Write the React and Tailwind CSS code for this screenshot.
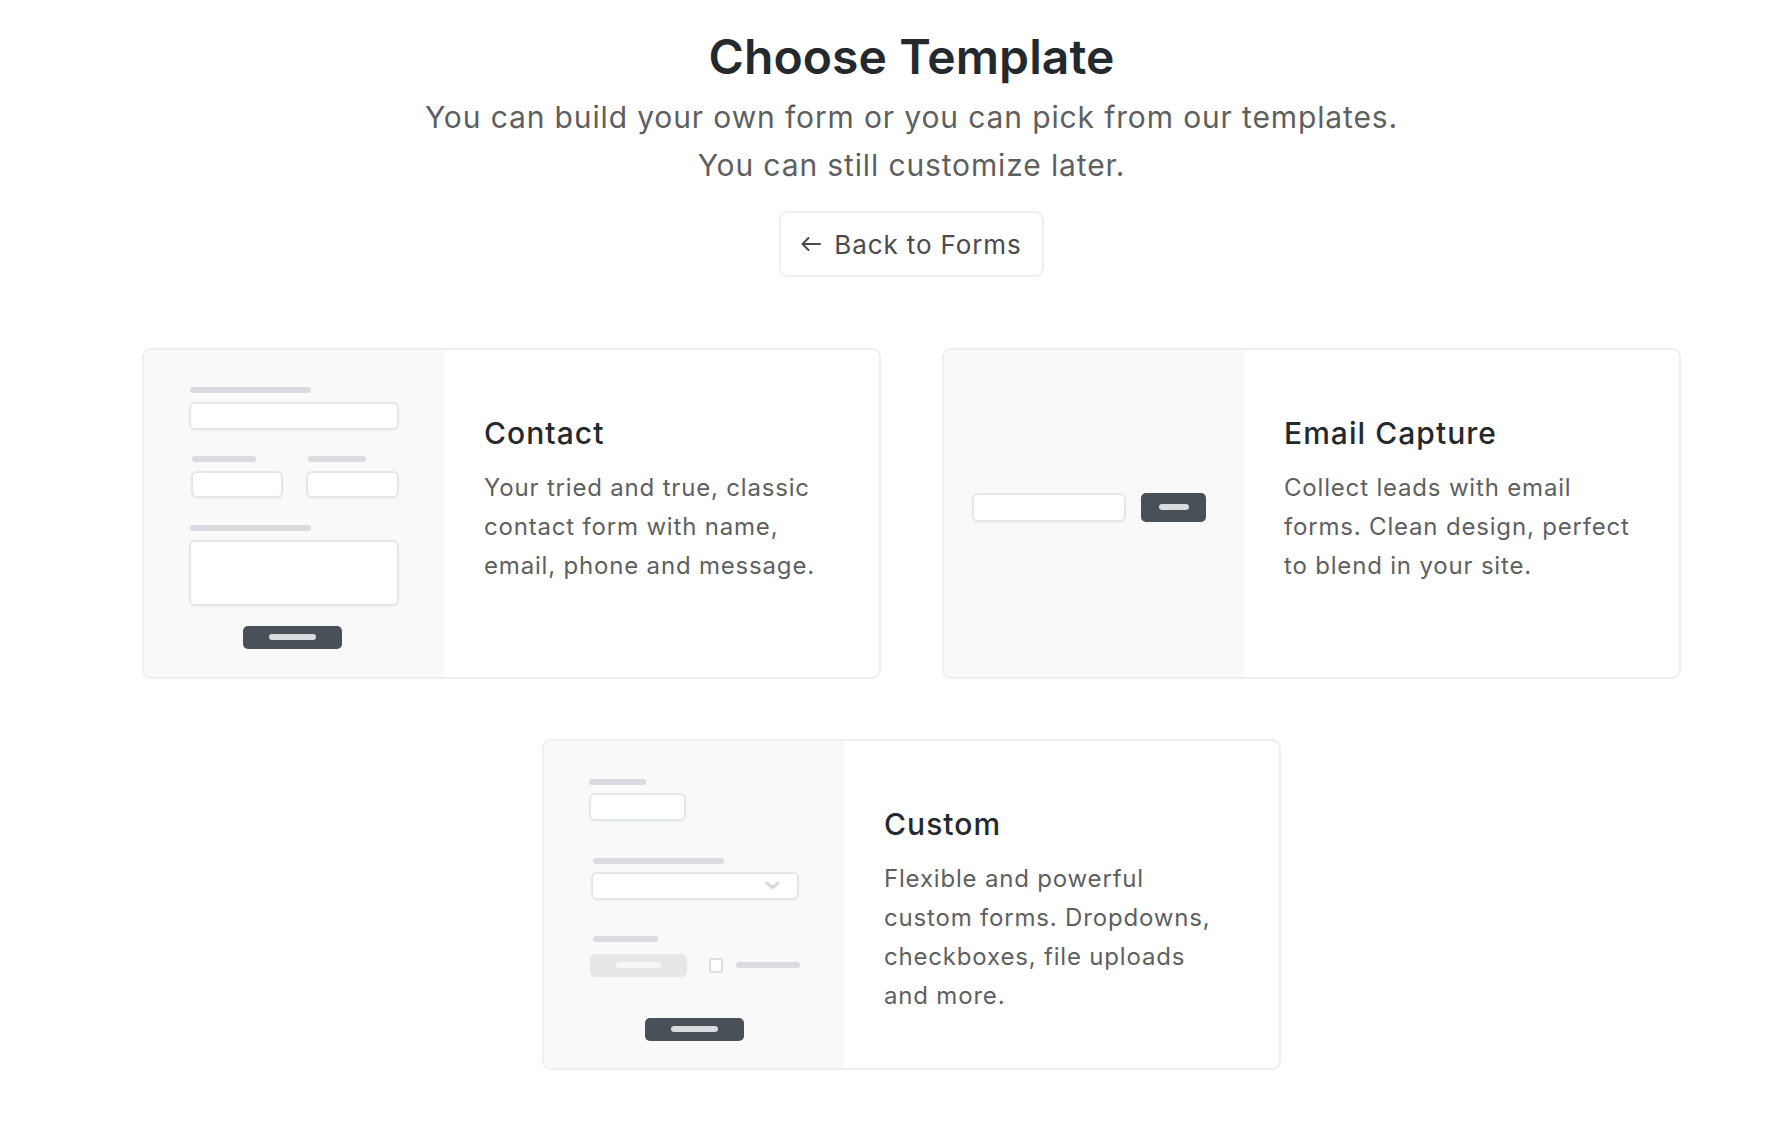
const Bar = ({ w, className = '' }) => (
  <div className={`h-[6px] rounded-full bg-[#d8dbdf] ${className}`} style={{ width: w }} />
)

const Field = ({ w, h = 28, className = '', children }) => (
  <div
    className={`bg-white border-2 border-[#e3e6ea] rounded-[6px] shadow-[0_1px_2px_rgba(0,0,0,0.04)] ${className}`}
    style={{ width: w, height: h }}
  >
    {children}
  </div>
)

const DarkButton = ({ w = 99, h = 23, bar = 47 }) => (
  <div className="bg-[#4a5057] rounded-[5px] flex items-center justify-center" style={{ width: w, height: h }}>
    <div className="h-[6px] rounded-full bg-[#d9dbde]" style={{ width: bar }} />
  </div>
)

function ContactMock() {
  return (
    <div className="w-[210px] flex flex-col">
      <Bar w={121} className="ml-[1px]" />
      <Field w={210} className="mt-[9px]" />
      <div className="mt-[26px] flex gap-[23px]">
        <div className="flex flex-col ml-[2px]">
          <Bar w={64} className="ml-[1px]" />
          <Field w={92} h={27} className="mt-[9px]" />
        </div>
        <div className="flex flex-col">
          <Bar w={58} className="ml-[2px]" />
          <Field w={93} h={27} className="mt-[9px]" />
        </div>
      </div>
      <Bar w={121} className="mt-[27px] ml-[1px]" />
      <Field w={210} h={66} className="mt-[9px]" />
      <div className="mt-[20px] flex justify-center pr-[3px]">
        <DarkButton />
      </div>
    </div>
  )
}

function EmailMock() {
  return (
    <div className="flex items-center gap-[15px] pr-[10px]">
      <Field w={154} h={29} />
      <DarkButton w={65} h={29} bar={30} />
    </div>
  )
}

function CustomMock() {
  return (
    <div className="w-[211px] flex flex-col">
      <Bar w={57} />
      <Field w={97} className="mt-[8px]" />
      <Bar w={131} className="mt-[37px] ml-[4px]" />
      <Field w={208} className="mt-[8px] ml-[2px] flex items-center justify-end pr-[17px]">
        <svg width="15" height="9" viewBox="0 0 15 9" fill="none">
          <path d="M2 2.2l5.5 4.3 5.5-4.3" stroke="#d6d9dd" strokeWidth="3.2" strokeLinecap="round" strokeLinejoin="round" />
        </svg>
      </Field>
      <Bar w={65} className="mt-[36px] ml-[4px]" />
      <div className="mt-[12px] flex items-center ml-[1px]">
        <div className="w-[97px] h-[23px] rounded-[5px] bg-[#e7e7e8] flex items-center justify-center">
          <div className="w-[45px] h-[6px] rounded-full bg-[#f7f7f8]" />
        </div>
        <div className="ml-[22px] w-[14px] h-[15px] rounded-[3px] border-2 border-[#dcdfe3] bg-white" />
        <Bar w={64} className="ml-[13px]" />
      </div>
      <div className="mt-[41px] flex justify-center">
        <DarkButton />
      </div>
    </div>
  )
}

const TEMPLATES = {
  contact: {
    title: 'Contact',
    desc: 'Your tried and true, classic contact form with name, email, phone and message.',
    mock: <ContactMock />,
    pad: 'pt-2',
  },
  email: {
    title: 'Email Capture',
    desc: 'Collect leads with email forms. Clean design, perfect to blend in your site.',
    mock: <EmailMock />,
    pad: 'pb-[13px]',
  },
  custom: {
    title: 'Custom',
    desc: 'Flexible and powerful custom forms. Dropdowns, checkboxes, file uploads and more.',
    mock: <CustomMock />,
    pad: 'pt-[10px]',
  },
}

function TemplateCard({ t }) {
  return (
    <div className="w-[739px] h-[331px] flex bg-white border-2 border-[#efefef] rounded-[9px] overflow-hidden cursor-pointer">
      <div className={`w-[300px] shrink-0 bg-[#f9f9fa] flex items-center justify-center ${t.pad}`}>
        {t.mock}
      </div>
      <div className="flex-1 pl-[40px] pr-[46px] pt-[65px]">
        <h3 className="text-[30px] leading-[36px] font-medium text-[#24292e] tracking-[0.035em]">{t.title}</h3>
        <p className="mt-[17px] text-[24px] leading-[39px] text-[#5e5f61] tracking-[0.034em]">{t.desc}</p>
      </div>
    </div>
  )
}

export default function App() {
  return (
    <div className="min-h-screen bg-white pl-[37px] pt-[33px] pb-16 flex flex-col items-center font-['Inter',sans-serif]">
      <h1 className="text-[48px] leading-[48px] font-semibold text-[#24292e] tracking-[0.1px]">Choose Template</h1>
      <p className="mt-[12px] text-[30px] leading-[48px] text-[#5e5f61] text-center tracking-[0.029em]">
        You can build your own form or you can pick from our templates.
        <br />
        You can still customize later.
      </p>
      <button className="mt-[22px] h-[66px] px-[20px] flex items-center gap-[13px] border-2 border-[#efefef] rounded-[9px] bg-white text-[26px] text-[#4a4b4d] tracking-[0.034em]">
        <svg width="20" height="14" viewBox="0 0 20 14" fill="none">
          <path d="M19 7H1.5M7.5 1L1.5 7l6 6" stroke="#4a4b4d" strokeWidth="2" strokeLinecap="round" strokeLinejoin="round" />
        </svg>
        Back to Forms
      </button>
      <div className="mt-[71px] grid grid-cols-2 gap-x-[61px]">
        <TemplateCard t={TEMPLATES.contact} />
        <TemplateCard t={TEMPLATES.email} />
      </div>
      <div className="mt-[60px]">
        <TemplateCard t={TEMPLATES.custom} />
      </div>
    </div>
  )
}
